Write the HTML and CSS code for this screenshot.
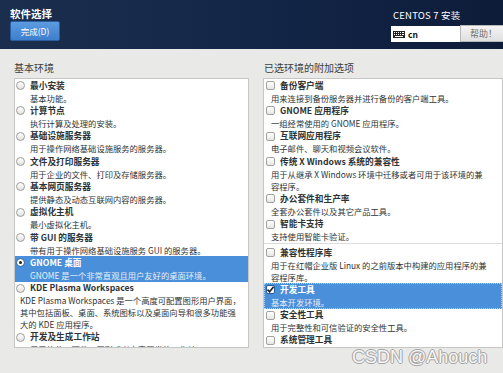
FILE: index.html
```html
<!DOCTYPE html>
<html lang="zh-CN">
<head>
    <meta charset="UTF-8">
    <title>软件选择</title>
    <link rel="stylesheet" href="styles.css">
</head>
<body>
<div class="header">
    <div class="header-left">
        <div class="spoke-title">软件选择</div>
        <button class="done-btn">完成(D)</button>
    </div>
    <div class="header-right">
        <div class="product">CENTOS 7 安装</div>
        <div class="kb-row">
            <div class="kb-field">
                <svg class="kb-icon" width="12" height="7" viewBox="0 0 12 7">
                    <rect x="0" y="0" width="12" height="7" fill="#222"/>
                    <g fill="#fff">
                        <rect x="1" y="1" width="1" height="1"/><rect x="3" y="1" width="1" height="1"/>
                        <rect x="5" y="1" width="1" height="1"/><rect x="7" y="1" width="1" height="1"/>
                        <rect x="9" y="1" width="2" height="1"/>
                        <rect x="1" y="3" width="1" height="1"/><rect x="3" y="3" width="1" height="1"/>
                        <rect x="5" y="3" width="1" height="1"/><rect x="7" y="3" width="1" height="1"/>
                        <rect x="9" y="3" width="2" height="1"/>
                        <rect x="2" y="5" width="8" height="1"/>
                    </g>
                </svg>
                <span>cn</span>
            </div>
            <button class="help-btn">帮助！</button>
        </div>
    </div>
</div>

<div class="main">
    <div class="column left-col">
        <div class="section-label">基本环境</div>
        <div class="list-box">
            <div class="opt">
                <div class="opt-title"><span class="radio"></span>最小安装</div>
                <div class="opt-desc">基本功能。</div>
            </div>
            <div class="opt">
                <div class="opt-title"><span class="radio"></span>计算节点</div>
                <div class="opt-desc">执行计算及处理的安装。</div>
            </div>
            <div class="opt">
                <div class="opt-title"><span class="radio"></span>基础设施服务器</div>
                <div class="opt-desc">用于操作网络基础设施服务的服务器。</div>
            </div>
            <div class="opt">
                <div class="opt-title"><span class="radio"></span>文件及打印服务器</div>
                <div class="opt-desc">用于企业的文件、打印及存储服务器。</div>
            </div>
            <div class="opt">
                <div class="opt-title"><span class="radio"></span>基本网页服务器</div>
                <div class="opt-desc">提供静态及动态互联网内容的服务器。</div>
            </div>
            <div class="opt">
                <div class="opt-title"><span class="radio"></span>虚拟化主机</div>
                <div class="opt-desc">最小虚拟化主机。</div>
            </div>
            <div class="opt">
                <div class="opt-title"><span class="radio"></span>带 GUI 的服务器</div>
                <div class="opt-desc">带有用于操作网络基础设施服务 GUI 的服务器。</div>
            </div>
            <div class="opt selected">
                <div class="opt-title"><span class="radio checked"></span>GNOME 桌面</div>
                <div class="opt-desc">GNOME 是一个非常直观且用户友好的桌面环境。</div>
            </div>
            <div class="opt">
                <div class="opt-title"><span class="radio"></span>KDE Plasma Workspaces</div>
                <div class="opt-desc wrapped">KDE Plasma Workspaces 是一个高度可配置图形用户界面，<br>其中包括面板、桌面、系统图标以及桌面向导和很多功能强<br>大的 KDE 应用程序。</div>
            </div>
            <div class="opt">
                <div class="opt-title"><span class="radio"></span>开发及生成工作站</div>
                <div class="opt-desc">用于软件、硬件、图形或者内容开发的工作站。</div>
            </div>
        </div>
    </div>

    <div class="column right-col">
        <div class="section-label">已选环境的附加选项</div>
        <div class="list-box">
            <div class="opt">
                <div class="opt-title"><span class="check"></span>备份客户端</div>
                <div class="opt-desc">用来连接到备份服务器并进行备份的客户端工具。</div>
            </div>
            <div class="opt">
                <div class="opt-title"><span class="check"></span>GNOME 应用程序</div>
                <div class="opt-desc">一组经常使用的 GNOME 应用程序。</div>
            </div>
            <div class="opt">
                <div class="opt-title"><span class="check"></span>互联网应用程序</div>
                <div class="opt-desc">电子邮件、聊天和视频会议软件。</div>
            </div>
            <div class="opt">
                <div class="opt-title"><span class="check"></span>传统 X Windows 系统的兼容性</div>
                <div class="opt-desc">用于从继承 X Windows 环境中迁移或者可用于该环境的兼<br>容程序。</div>
            </div>
            <div class="opt">
                <div class="opt-title"><span class="check"></span>办公套件和生产率</div>
                <div class="opt-desc">全套办公套件以及其它产品工具。</div>
            </div>
            <div class="opt">
                <div class="opt-title"><span class="check"></span>智能卡支持</div>
                <div class="opt-desc">支持使用智能卡验证。</div>
            </div>
            <div class="separator"></div>
            <div class="opt">
                <div class="opt-title"><span class="check"></span>兼容性程序库</div>
                <div class="opt-desc">用于在红帽企业版 Linux 的之前版本中构建的应用程序的兼<br>容程序库。</div>
            </div>
            <div class="opt selected focused">
                <div class="opt-title">
                    <span class="check checked">
                        <svg width="9" height="9" viewBox="0 0 9 9"><path d="M1.5 4.6 L3.6 6.7 L7.6 1.8" fill="none" stroke="#1e1e1e" stroke-width="1.6"/></svg>
                    </span>开发工具
                </div>
                <div class="opt-desc">基本开发环境。</div>
            </div>
            <div class="opt">
                <div class="opt-title"><span class="check"></span>安全性工具</div>
                <div class="opt-desc">用于完整性和可信验证的安全性工具。</div>
            </div>
            <div class="opt">
                <div class="opt-title"><span class="check"></span>系统管理工具</div>
                <div class="opt-desc">这组工具主要用于系统管理。</div>
            </div>
        </div>
    </div>
</div>

<div class="watermark">CSDN @Ahouch</div>
</body>
</html>
```

FILE: styles.css
```css
body {
    margin: 0;
    width: 503px;
    height: 373px;
    overflow: hidden;
    background-color: #e9e9e8;
    font-family: "Noto Sans CJK SC", "Noto Sans", sans-serif;
    color: #2e3436;
    position: relative;
}

.header {
    height: 49px;
    display: flex;
    justify-content: space-between;
    background: linear-gradient(90deg, #1b2e4d 0%, #15284a 40%, #102141 75%, #0d1c38 100%);
    color: white;
}
.header-left {
    padding-left: 10px;
}
.spoke-title {
    padding-top: 7px;
    height: 14px;
    line-height: 14px;
    font-size: 10.5px;
    font-weight: bold;
}
.done-btn {
    display: block;
    width: 50px;
    height: 20px;
    padding: 0;
    font-family: inherit;
    font-size: 8.5px;
    color: white;
    background: linear-gradient(#5c9be0, #3d7fcc);
    border: 1px solid #2a5e9e;
    border-radius: 2px;
}

.header-right {
    width: 112px;
}
.product {
    padding: 9px 0 0 2px;
    height: 12px;
    line-height: 12px;
    font-size: 9.5px;
    letter-spacing: 0.2px;
}
.kb-row {
    display: flex;
    margin-top: 4px;
    height: 17px;
}
.kb-field {
    width: 69px;
    height: 16px;
    margin-top: 1px;
    background: white;
    display: flex;
    align-items: center;
    padding-left: 2px;
    box-sizing: border-box;
    color: #111;
    font-size: 8.5px;
    font-weight: bold;
}
.kb-icon {
    margin-right: 3px;
}
.help-btn {
    flex: 1;
    height: 17px;
    padding: 0 0 0 9px;
    text-align: left;
    font-family: inherit;
    font-size: 9px;
    color: #707070;
    background: linear-gradient(#f4f4f4, #e0e0e0);
    border: 1px solid #b8b8b8;
    border-right: none;
}

.main {
    display: flex;
    gap: 14px;
    padding: 13px 0 0 14px;
}
.left-col {
    width: 237px;
}
.right-col {
    width: 240px;
    flex-shrink: 0;
}
.section-label {
    height: 12px;
    line-height: 12px;
    font-size: 10px;
    color: #3b3f40;
    margin-bottom: 4px;
}
.right-col .section-label {
    padding-left: 1px;
}
.list-box {
    height: 270px;
    box-sizing: border-box;
    border: 1px solid #c6c6c4;
    background: white;
    overflow: hidden;
}

.opt {
    padding: 0.66px 0;
}
.opt-title {
    display: flex;
    align-items: center;
    height: 12px;
    line-height: 12px;
    font-size: 8.7px;
    font-weight: bold;
    white-space: nowrap;
}
.opt-desc {
    line-height: 12px;
    font-size: 8.3px;
    white-space: nowrap;
    padding-left: 15px;
}
.opt-desc.wrapped {
    padding-left: 5px;
}
.right-col .opt-desc {
    padding-left: 7px;
}
.opt.selected {
    background-color: #4a8fd9;
    color: white;
}
.opt.selected .opt-desc {
    color: #e6eef8;
}
.opt.focused {
    outline: 1px dotted rgba(255, 255, 255, 0.6);
    outline-offset: -1px;
}

.radio {
    width: 9px;
    height: 9px;
    box-sizing: border-box;
    margin: 0 5px 0 1px;
    border: 1px solid #9c9c9a;
    border-radius: 50%;
    background: linear-gradient(#ffffff, #e2e2e0);
    position: relative;
}
.radio.checked {
    background: white;
    border-color: #2a5e9e;
}
.radio.checked::after {
    content: "";
    position: absolute;
    left: 2px;
    top: 2px;
    width: 3px;
    height: 3px;
    border-radius: 50%;
    background: #1e1e1e;
}
.check {
    width: 9px;
    height: 9px;
    box-sizing: border-box;
    margin: 0 5px 0 2px;
    border: 1px solid #a2a2a0;
    border-radius: 2px;
    background: linear-gradient(#ffffff, #e6e6e4);
    display: flex;
    align-items: center;
    justify-content: center;
}
.check.checked {
    background: white;
    border-color: #2a5e9e;
}
.check svg {
    flex-shrink: 0;
}
.separator {
    border-top: 1px solid #dcdcdc;
    margin: 0 0 2px;
}

.watermark {
    position: absolute;
    left: 352px;
    top: 347px;
    font-family: "Liberation Sans", Arial, sans-serif;
    font-size: 18px;
    line-height: 20px;
    color: #f6f6f6;
    text-shadow: -1px 0 #a4a4a4, 1px 0 #a4a4a4, 0 -1px #a4a4a4, 0 1px #a4a4a4;
}
```
